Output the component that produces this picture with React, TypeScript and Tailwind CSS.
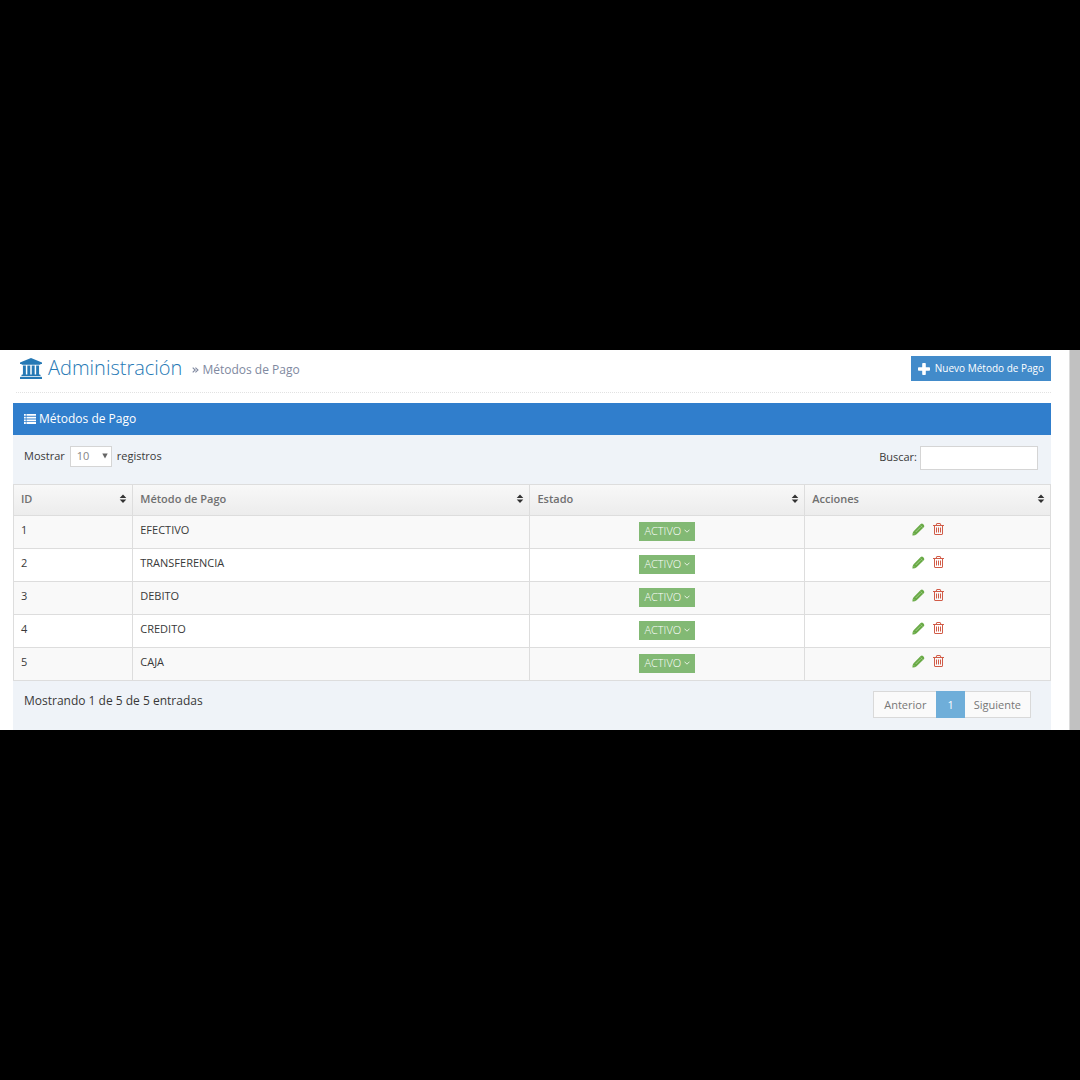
import React from "react";

type Method = { id: number; name: string };

const methods: Method[] = [
  { id: 1, name: "EFECTIVO" },
  { id: 2, name: "TRANSFERENCIA" },
  { id: 3, name: "DEBITO" },
  { id: 4, name: "CREDITO" },
  { id: 5, name: "CAJA" },
];

const columns = [
  { label: "ID", width: "w-[11.5%]" },
  { label: "Método de Pago", width: "w-[38.3%]" },
  { label: "Estado", width: "w-[26.5%]" },
  { label: "Acciones", width: "w-[23.7%]" },
];

function BankIcon() {
  return (
    <svg viewBox="0 0 1920 1792" className="h-[21px] w-[22px] fill-[#2679b5]" preserveAspectRatio="none" aria-hidden="true">
      <path d="M960 0l960 384v128h-128q0 26-20.5 45t-48.5 19h-1526q-28 0-48.5-19t-20.5-45h-128v-128zM256 640h256v768h128v-768h256v768h128v-768h256v768h128v-768h256v768h59q28 0 48.5 19t20.5 45v64h-1664v-64q0-26 20.5-45t48.5-19h59v-768zM1851 1600q28 0 48.5 19t20.5 45v128h-1920v-128q0-26 20.5-45t48.5-19h1782z" />
    </svg>
  );
}

function ListIcon() {
  return (
    <svg viewBox="0 0 12 10" className="h-[10px] w-3 fill-white" aria-hidden="true">
      <path d="M0 0h1.800v1.800H0zM2.500 0H12v1.800H2.500zM0 2.700h1.800v1.800H0zM2.500 2.700H12v1.800H2.500zM0 5.400h1.800v1.800H0zM2.500 5.400H12v1.800H2.500zM0 8.100h1.800v1.800H0zM2.500 8.100H12v1.800H2.500z" />
    </svg>
  );
}

function PlusIcon() {
  return (
    <svg viewBox="0 0 12 12" className="size-3 fill-white" aria-hidden="true">
      <path d="M5 0h2q.8 0 .8.8v3.400h3.400q.8 0 .8.8v2q0 .8-.8.8H7.800v3.400q0 .8-.8.8H5q-.8 0-.8-.8V7.800H.8Q0 7.800 0 7V5q0-.8.8-.8h3.400V.8Q4.200 0 5 0z" />
    </svg>
  );
}

function DoubleAngleIcon() {
  return (
    <svg viewBox="0 0 8 8" className="h-2 w-[7px] fill-none stroke-[#8089a0]" strokeWidth="1.300" aria-hidden="true">
      <path d="M.8 1.200L3.700 4 .8 6.800M3.900 1.200L6.800 4 3.900 6.800" />
    </svg>
  );
}

function SortIcon() {
  return (
    <svg viewBox="0 0 8 10" className="h-[10px] w-2 shrink-0 fill-[#333]" aria-hidden="true">
      <path d="M4 .6L7.300 4H.7zM4 9L.7 5.600h6.600z" />
    </svg>
  );
}

function PencilIcon() {
  return (
    <svg viewBox="0 0 13 13" className="size-[13px]" aria-hidden="true">
      <path d="M8.700 1.100Q9.900 0 11 1l.9.900q1 1.100-.1 2.300L4.600 11.300Q3.200 12.600.4 12.500.3 9.600 1.600 8.300z" className="fill-[#69aa46]" />
      <path d="M3.700 9L8.500 4.200M8.600 2.500l1.900 1.900M1.700 10.300l1 1" className="fill-none stroke-[#c5e0b6]" strokeWidth="0.6" />
    </svg>
  );
}

function TrashIcon() {
  return (
    <svg viewBox="192 128 1408 1536" className="h-3 w-[11px] fill-[#d15b47]" aria-hidden="true">
      <path d="M704 736v576q0 14-9 23t-23 9h-64q-14 0-23-9t-9-23v-576q0-14 9-23t23-9h64q14 0 23 9t9 23zm256 0v576q0 14-9 23t-23 9h-64q-14 0-23-9t-9-23v-576q0-14 9-23t23-9h64q14 0 23 9t9 23zm256 0v576q0 14-9 23t-23 9h-64q-14 0-23-9t-9-23v-576q0-14 9-23t23-9h64q14 0 23 9t9 23zm128 724v-948h-896v948q0 22 7 40.500t14.500 27 10.500 8.500h832q3 0 10.500-8.500t14.500-27 7-40.500zm-672-1076h448l-48-117q-7-9-17-11h-317q-10 2-17 11zm928 32v64q0 14-9 23t-23 9h-96v948q0 83-47 143.500t-113 60.500h-832q-66 0-113-58.500t-47-141.500v-952h-96q-14 0-23-9t-9-23v-64q0-14 9-23t23-9h309l70-167q15-37 54-63t79-26h320q40 0 79 26t54 63l70 167h309q14 0 23 9t9 23z" />
    </svg>
  );
}

function StatusButton() {
  return (
    <button type="button" className="inline-flex h-[19px] w-14 items-center justify-center gap-[3px] bg-[#82b974] text-[11px] font-light text-white">
      ACTIVO
      <svg viewBox="0 0 6 4" className="h-1 w-1.5 fill-none stroke-white" strokeWidth="0.8" aria-hidden="true">
        <path d="M.5.700L3 3.200 5.500.700" />
      </svg>
    </button>
  );
}

export default function App() {
  return (
    <div className="flex min-h-screen items-center bg-black font-['Open_Sans',sans-serif] text-[#393939]">
      <div className="flex w-full bg-white">
        <main className="min-w-0 flex-1 pr-[18px] pl-[13px]">
          <header className="ml-[3px] flex h-[43px] items-start justify-between border-b border-dotted border-[#e2e2e2] pt-1.5">
            <div className="flex items-center pl-1">
              <BankIcon />
              <h1 className="ml-1.5 text-xl leading-6 font-light text-[#2679b5]">Administración</h1>
              <p className="mt-1 ml-2.5 flex items-center gap-[3px] text-xs leading-5 text-[#8089a0]">
                <DoubleAngleIcon />
                Métodos de Pago
              </p>
            </div>
            <button type="button" className="flex h-[25px] items-center gap-[5px] bg-[#428bca] px-[7px] text-[10px] text-white">
              <PlusIcon />
              Nuevo Método de Pago
            </button>
          </header>

          <section className="mt-2.5 bg-[#eff3f8]">
            <h2 className="flex h-8 items-center gap-[3px] bg-[#307ecc] px-[11px] text-xs font-normal text-white">
              <ListIcon />
              Métodos de Pago
            </h2>

            <div className="flex h-[49px] items-start justify-between pt-[11px] pr-[13px] pl-[11px] text-[11px]">
              <div className="flex h-[21px] items-center gap-[5px]">
                <label htmlFor="page-size">Mostrar</label>
                <span className="relative">
                  <select id="page-size" defaultValue="10" className="block h-[21px] w-[42px] appearance-none border border-[#d5d5d5] bg-white pl-1.5 text-[11px] text-[#858585]">
                    <option>10</option>
                    <option>25</option>
                    <option>50</option>
                  </select>
                  <svg viewBox="0 0 6 6" className="pointer-events-none absolute top-[7px] right-1 size-1.5 fill-[#666]" aria-hidden="true">
                    <path d="M.3.500h5.400L3 5.500z" />
                  </svg>
                </span>
                <span>registros</span>
              </div>
              <div className="flex items-center gap-[3px]">
                <label htmlFor="search" className="pb-0.5">Buscar:</label>
                <input id="search" type="text" className="h-6 w-[118px] border border-[#d5d5d5] bg-white px-1" />
              </div>
            </div>

            <table className="w-full table-fixed border-collapse border border-[#dddddd] text-[11px]">
              <thead>
                <tr className="h-[31px] bg-linear-to-b from-[#f8f8f8] to-[#ececec]">
                  {columns.map((c) => (
                    <th key={c.label} scope="col" className={`${c.width} border border-[#dddddd] pr-[5px] pb-0.5 pl-[7px] text-left font-semibold text-[#707070]`}>
                      <span className="flex items-center justify-between">
                        {c.label}
                        <SortIcon />
                      </span>
                    </th>
                  ))}
                </tr>
              </thead>
              <tbody>
                {methods.map((m) => (
                  <tr key={m.id} className="h-[33px] bg-white odd:bg-[#f9f9f9]">
                    <td className="border border-[#dddddd] px-[7px] pb-1">{m.id}</td>
                    <td className="border border-[#dddddd] px-[7px] pb-1">{m.name}</td>
                    <td className="border border-[#dddddd] pb-0.5 text-center">
                      <span className="flex justify-center">
                        <StatusButton />
                      </span>
                    </td>
                    <td className="border border-[#dddddd]">
                      <span className="flex items-center justify-center gap-2 pb-1.5">
                        <button type="button" aria-label={`Editar ${m.name}`}>
                          <PencilIcon />
                        </button>
                        <button type="button" aria-label={`Eliminar ${m.name}`}>
                          <TrashIcon />
                        </button>
                      </span>
                    </td>
                  </tr>
                ))}
              </tbody>
            </table>

            <div className="flex h-[49px] items-start justify-between pt-2.5 pr-5 pl-[11px]">
              <p className="text-xs leading-5">Mostrando 1 de 5 de 5 entradas</p>
              <nav aria-label="Paginación" className="flex h-[27px] text-[11px] leading-[25px] text-[#777]">
                <a href="#anterior" className="border border-[#d9d9d9] bg-[#fafafa] px-2.5">Anterior</a>
                <a href="#1" aria-current="page" className="z-10 -mx-px border border-[#6faed9] bg-[#6faed9] px-2.5 text-white">1</a>
                <a href="#siguiente" className="border border-[#d9d9d9] bg-[#fafafa] px-[9px]">Siguiente</a>
              </nav>
            </div>
          </section>
        </main>
        <div className="w-[11px] border-l border-[#dcdcdc] bg-[#c1c1c1]" />
      </div>
    </div>
  );
}
